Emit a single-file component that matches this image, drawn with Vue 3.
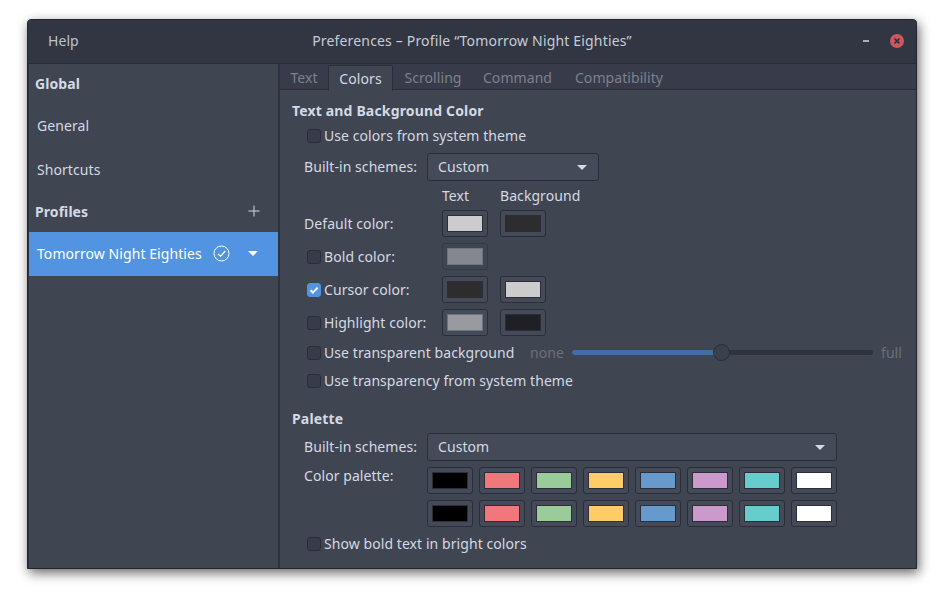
<template>
  <div class="page">
    <div class="window">
      <header class="titlebar">
        <span class="menu">Help</span>
        <span class="title">Preferences – Profile “Tomorrow Night Eighties”</span>
        <div class="controls">
          <span class="minimize"></span>
          <span class="close">
            <svg width="14" height="14" viewBox="0 0 14 14">
              <circle cx="7" cy="7" r="7" fill="#cc575d" />
              <path d="M4.6 4.6l4.8 4.8M9.4 4.6l-4.8 4.8" stroke="#2f343f" stroke-width="1.8" />
            </svg>
          </span>
        </div>
      </header>

      <div class="body">
        <!-- Sidebar -->
        <aside class="sidebar">
          <div class="side-head">Global</div>
          <div class="side-item">General</div>
          <div class="side-item">Shortcuts</div>
          <div class="side-head profiles">
            <span>Profiles</span>
            <svg width="12" height="12" viewBox="0 0 12 12">
              <path d="M6 0.5v11M0.5 6h11" stroke="#d3dae3" stroke-width="1" />
            </svg>
          </div>
          <div class="side-item selected">
            <span class="profile-name">Tomorrow Night Eighties</span>
            <svg class="default-mark" width="17" height="17" viewBox="0 0 17 17" fill="none">
              <circle cx="8.5" cy="8.5" r="7.5" stroke="#fff" stroke-width="1" />
              <path d="M5 8.8l2.6 2.6 4.6-5.4" stroke="#fff" stroke-width="1.2" />
            </svg>
            <span class="arrow white"></span>
          </div>
        </aside>

        <!-- Preferences -->
        <main class="panel">
          <nav class="tabs">
            <span v-for="tab in tabs" :key="tab" class="tab" :class="{ active: tab === 'Colors' }">{{ tab }}</span>
          </nav>

          <div class="content">
            <h2 class="section-title">Text and Background Color</h2>
            <label class="check-row first">
              <span class="checkbox"></span>Use colors from system theme
            </label>
            <div class="scheme-row">
              <span class="row-label">Built-in schemes:</span>
              <div class="combo small"><span>Custom</span><span class="arrow"></span></div>
            </div>

            <div class="color-grid color-head">
              <span></span>
              <span class="col-head">Text</span>
              <span class="col-head">Background</span>
            </div>
            <div v-for="row in colorRows" :key="row.label" class="color-grid color-row">
              <span class="color-label" :class="{ plain: !row.check }">
                <span v-if="row.check" class="checkbox" :class="{ checked: row.checked }">
                  <svg v-if="row.checked" width="14" height="14" viewBox="0 0 14 14" fill="none">
                    <path d="M3.6 7.2l2.4 2.4 4.6-5" stroke="#fff" stroke-width="2" />
                  </svg>
                </span>
                {{ row.label }}
              </span>
              <span class="swatch-btn" :class="{ dim: row.dim }"><i class="swatch" :class="{ soft: row.soft }" :style="{ background: row.fg }"></i></span>
              <span v-if="row.bg" class="swatch-btn"><i class="swatch" :style="{ background: row.bg }"></i></span>
            </div>

            <div class="transparent-row">
              <label class="check-row transparent-label">
                <span class="checkbox"></span>Use transparent background
              </label>
              <div class="slider">
                <span class="muted">none</span>
                <div class="track">
                  <div class="fill"></div>
                  <div class="thumb"></div>
                </div>
                <span class="muted">full</span>
              </div>
            </div>
            <label class="check-row system">
              <span class="checkbox"></span>Use transparency from system theme
            </label>

            <h2 class="section-title palette-title">Palette</h2>
            <div class="scheme-row tight">
              <span class="row-label">Built-in schemes:</span>
              <div class="combo wide"><span>Custom</span><span class="arrow"></span></div>
            </div>
            <div class="palette">
              <span class="row-label palette-label">Color palette:</span>
              <div class="palette-grid">
                <span v-for="(c, i) in paletteColors" :key="i" class="swatch-btn"><i class="swatch" :style="{ background: c }"></i></span>
              </div>
            </div>
            <label class="check-row bright">
              <span class="checkbox"></span>Show bold text in bright colors
            </label>
          </div>
        </main>
      </div>
    </div>
  </div>
</template>

<script setup>
const tabs = ['Text', 'Colors', 'Scrolling', 'Command', 'Compatibility']

const colorRows = [
  { label: 'Default color:', fg: '#cccccc', bg: '#2d2d2d' },
  { label: 'Bold color:', check: true, fg: '#85878e', dim: true, soft: true },
  { label: 'Cursor color:', check: true, checked: true, fg: '#2d2d2d', bg: '#cccccc' },
  { label: 'Highlight color:', check: true, fg: '#999a9f', bg: '#1f2026', soft: true }
]

const row = ['#000000', '#f2777a', '#99cc99', '#ffcc66', '#6699cc', '#cc99cc', '#66cccc', '#ffffff']
const paletteColors = [...row, ...row]
</script>

<style>
html,
body {
  margin: 0;
  background: #ffffff;
}
</style>

<style scoped>
* {
  box-sizing: border-box;
}

.page {
  width: 948px;
  height: 608px;
  padding: 19px 0 0 27px;
  background: #ffffff;
}

.window {
  width: 890px;
  height: 550px;
  display: flex;
  flex-direction: column;
  background: #404552;
  border: 1px solid #23262e;
  border-radius: 4px 4px 0 0;
  box-shadow: 2px 4px 12px rgba(0, 0, 0, 0.6);
  font-family: "Noto Sans", sans-serif;
  font-size: 14px;
  letter-spacing: 0.07px;
  color: #d3dae3;
}

.titlebar {
  height: 44px;
  flex-shrink: 0;
  display: flex;
  align-items: center;
  position: relative;
  padding-bottom: 2px;
  background: #323642;
  border-bottom: 1px solid #2b2e39;
  border-radius: 3px 3px 0 0;
}

.menu {
  margin-left: 20px;
  color: #bcc3cd;
}

.title {
  position: absolute;
  left: 0;
  right: 0;
  text-align: center;
  letter-spacing: 0.17px;
  color: #c5ccd6;
}

.controls {
  margin-left: auto;
  margin-right: 12px;
  display: flex;
  align-items: center;
  gap: 21px;
  position: relative;
}

.minimize {
  width: 6px;
  height: 2px;
  background: #a9aeb8;
}

.close {
  display: flex;
}

.body {
  flex: 1;
  display: flex;
  min-height: 0;
}

.sidebar {
  width: 252px;
  flex-shrink: 0;
  background: #404552;
  border-left: 1px solid #2f333e;
  border-right: 2px solid #2f333e;
}

.side-head {
  height: 40px;
  display: flex;
  align-items: center;
  padding: 0 0 2px 6px;
  font-weight: 700;
}

.profiles {
  justify-content: space-between;
  padding-right: 18px;
}

.side-item {
  height: 44px;
  display: flex;
  align-items: center;
  padding: 0 0 2px 8px;
}

.selected {
  background: #5294e2;
  color: #ffffff;
}

.profile-name {
  width: 176px;
  white-space: nowrap;
}

.default-mark {
  flex-shrink: 0;
}

.selected .arrow {
  margin-left: 18px;
}

.arrow {
  width: 0;
  height: 0;
  border-left: 5px solid transparent;
  border-right: 5px solid transparent;
  border-top: 5px solid #d3dae3;
}

.arrow.white {
  border-top-color: #ffffff;
}

.panel {
  flex: 1;
  min-width: 0;
  display: flex;
  flex-direction: column;
}

.tabs {
  height: 26px;
  flex-shrink: 0;
  display: grid;
  grid-template-columns: 48px 65px 80px 89px 114px;
  background: #383c4a;
  border-bottom: 1px solid #2b2e39;
}

.tab {
  display: flex;
  align-items: center;
  justify-content: center;
  color: #7c818c;
  white-space: nowrap;
}

.tab.active {
  margin-top: 1px;
  height: 26px;
  background: #404552;
  border: 1px solid #2b2e39;
  border-bottom: none;
  border-radius: 2px 2px 0 0;
  color: #d3dae3;
}

.content {
  padding: 12px 0 0 12px;
}

.section-title {
  margin: 0;
  height: 18px;
  line-height: 18px;
  font-size: 14px;
  font-weight: 700;
  letter-spacing: 0.16px;
}

.checkbox {
  width: 14px;
  height: 14px;
  flex-shrink: 0;
  display: inline-flex;
  margin-right: 3px;
  background: #383c4a;
  border: 1px solid #2b2e39;
  border-radius: 3px;
}

.checkbox.checked {
  background: #5294e2;
  border-color: #5294e2;
}

.checkbox svg {
  margin: -1px;
}

.check-row {
  height: 20px;
  display: flex;
  align-items: center;
  margin-left: 15px;
  white-space: nowrap;
}

.check-row .checkbox {
  margin-top: 2px;
}

.check-row.first {
  margin-top: 5px;
}

.scheme-row {
  display: flex;
  align-items: center;
  margin-top: 8px;
  height: 28px;
  padding-left: 12px;
}

.scheme-row.tight {
  margin-top: 5px;
}

.row-label {
  width: 123px;
  flex-shrink: 0;
  padding-bottom: 2px;
  white-space: nowrap;
}

.combo {
  height: 28px;
  display: flex;
  align-items: center;
  justify-content: space-between;
  padding: 0 11px 2px 10px;
  background: #444a58;
  border: 1px solid #2b2e39;
  border-radius: 3px;
}

.combo .arrow {
  margin-top: 2px;
}

.combo.small {
  width: 172px;
}

.combo.wide {
  width: 410px;
}

.color-grid {
  display: grid;
  grid-template-columns: 126px 46px 46px;
  column-gap: 12px;
  padding-left: 12px;
  align-items: center;
}

.color-head {
  height: 20px;
  margin-top: 4px;
  margin-bottom: -1px;
}

.col-head {
  white-space: nowrap;
}

.color-row {
  height: 27px;
  margin-top: 6px;
}

.color-label {
  display: flex;
  align-items: center;
  padding-left: 3px;
  white-space: nowrap;
}

.color-label.plain {
  padding-left: 0;
}

.swatch-btn {
  width: 46px;
  height: 27px;
  display: flex;
  align-items: center;
  justify-content: center;
  background: #444a58;
  border: 1px solid #2b2e39;
  border-radius: 3px;
}

.swatch-btn.dim {
  background: #404552;
  border-color: #363a46;
}

.swatch {
  display: block;
  width: 36px;
  height: 17px;
  border: 1px solid #2b2e39;
}

.swatch.soft {
  border-color: #6f737d;
}

.transparent-row {
  display: flex;
  align-items: center;
  height: 20px;
  margin-top: 6px;
}

.transparent-label {
  width: 223px;
  flex-shrink: 0;
}

.slider {
  display: grid;
  grid-template-columns: 34px 301px auto;
  column-gap: 8px;
  align-items: center;
}

.muted {
  color: #6b707b;
}

.track {
  height: 5px;
  position: relative;
  background: #2f333e;
  border-radius: 3px;
}

.fill {
  width: 145px;
  height: 100%;
  background: #406ea5;
  border-radius: 3px 0 0 3px;
}

.thumb {
  position: absolute;
  left: 141px;
  top: -6px;
  width: 17px;
  height: 17px;
  background: #3b404d;
  border: 1px solid #2b2e39;
  border-radius: 50%;
}

.check-row.system {
  margin-top: 8px;
}

.palette-title {
  margin-top: 20px;
}

.palette {
  display: flex;
  margin-top: 6px;
  padding-left: 12px;
}

.palette-label {
  height: 20px;
  margin-top: -1px;
}

.palette-grid {
  display: grid;
  grid-template-columns: repeat(8, 46px);
  gap: 6px;
}

.check-row.bright {
  margin-top: 6px;
}
</style>
